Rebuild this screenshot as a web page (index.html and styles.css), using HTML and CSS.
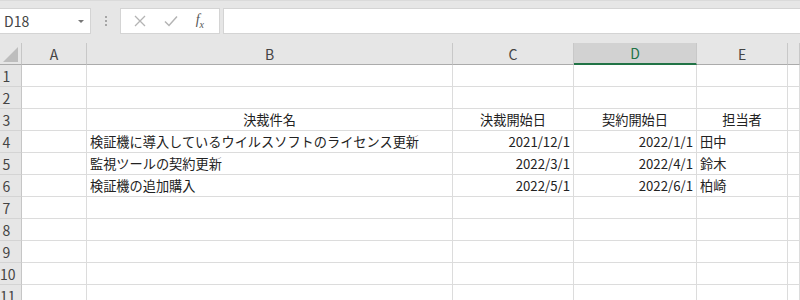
FILE: index.html
```html
<!DOCTYPE html>
<html lang="ja">
  <head>
    <meta charset="UTF-8" />
    <title>Book1 - Excel</title>
    <link rel="stylesheet" href="styles.css">
  </head>
  <body>
    <div class="toolbar">
      <div class="namebox">
        <span>D18</span>
        <span class="caret"></span>
      </div>
      <div class="grip"><i></i><i></i><i></i></div>
      <div class="fbuttons">
        <svg class="ficon" width="12" height="12" viewBox="0 0 12 12">
          <path d="M1 1 L11 11 M11 1 L1 11" stroke="#b4b4b4" stroke-width="1.3" fill="none" />
        </svg>
        <svg class="ficon" width="14" height="12" viewBox="0 0 14 12">
          <path d="M1 6.5 L5 10.5 L13 1.5" stroke="#b4b4b4" stroke-width="1.5" fill="none" />
        </svg>
        <span class="fx"><i>f</i><sub>x</sub></span>
      </div>
      <div class="formula"></div>
    </div>

    <div class="sheet">
      <div class="corner"><span></span></div>
      <div class="colhead">A</div>
      <div class="colhead">B</div>
      <div class="colhead">C</div>
      <div class="colhead selected">D</div>
      <div class="colhead">E</div>
      <div class="colhead"></div>

      <div class="rowhead">1</div>
      <div class="cell"></div><div class="cell"></div><div class="cell"></div><div class="cell"></div><div class="cell"></div><div class="cell"></div>

      <div class="rowhead">2</div>
      <div class="cell"></div><div class="cell"></div><div class="cell"></div><div class="cell"></div><div class="cell"></div><div class="cell"></div>

      <div class="rowhead">3</div>
      <div class="cell"></div>
      <div class="cell center">決裁件名</div>
      <div class="cell center">決裁開始日</div>
      <div class="cell center">契約開始日</div>
      <div class="cell center">担当者</div>
      <div class="cell"></div>

      <div class="rowhead">4</div>
      <div class="cell"></div>
      <div class="cell">検証機に導入しているウイルスソフトのライセンス更新</div>
      <div class="cell num">2021/12/1</div>
      <div class="cell num">2022/1/1</div>
      <div class="cell">田中</div>
      <div class="cell"></div>

      <div class="rowhead">5</div>
      <div class="cell"></div>
      <div class="cell">監視ツールの契約更新</div>
      <div class="cell num">2022/3/1</div>
      <div class="cell num">2022/4/1</div>
      <div class="cell">鈴木</div>
      <div class="cell"></div>

      <div class="rowhead">6</div>
      <div class="cell"></div>
      <div class="cell">検証機の追加購入</div>
      <div class="cell num">2022/5/1</div>
      <div class="cell num">2022/6/1</div>
      <div class="cell">柏崎</div>
      <div class="cell"></div>

      <div class="rowhead">7</div>
      <div class="cell"></div><div class="cell"></div><div class="cell"></div><div class="cell"></div><div class="cell"></div><div class="cell"></div>

      <div class="rowhead">8</div>
      <div class="cell"></div><div class="cell"></div><div class="cell"></div><div class="cell"></div><div class="cell"></div><div class="cell"></div>

      <div class="rowhead">9</div>
      <div class="cell"></div><div class="cell"></div><div class="cell"></div><div class="cell"></div><div class="cell"></div><div class="cell"></div>

      <div class="rowhead">10</div>
      <div class="cell"></div><div class="cell"></div><div class="cell"></div><div class="cell"></div><div class="cell"></div><div class="cell"></div>

      <div class="rowhead">11</div>
      <div class="cell"></div><div class="cell"></div><div class="cell"></div><div class="cell"></div><div class="cell"></div><div class="cell"></div>
    </div>
  </body>
</html>
```

FILE: styles.css
```css
/* styles.css */
body {
  margin: 0;
  background: #fff;
  font-family: "Noto Sans CJK JP", "Noto Sans", sans-serif;
  color: #333;
  overflow: hidden;
}

/* formula bar */
.toolbar {
  display: flex;
  align-items: flex-start;
  height: 43px;
  padding-top: 7px;
  box-sizing: border-box;
  background: #e6e6e6;
  border-top: 1px solid #dadada;
}

.namebox {
  display: flex;
  align-items: center;
  justify-content: space-between;
  width: 91px;
  height: 26px;
  box-sizing: border-box;
  padding: 0 6px 0 4px;
  background: #fff;
  border: 1px solid #d4d4d4;
  border-left: none;
  font-size: 14px;
  color: #444;
}

.caret {
  width: 0;
  height: 0;
  border-left: 3px solid transparent;
  border-right: 3px solid transparent;
  border-top: 3px solid #777;
}

.grip {
  display: flex;
  flex-direction: column;
  gap: 2px;
  width: 29px;
  align-items: center;
  padding-top: 8px;
}

.grip i {
  width: 2px;
  height: 2px;
  background: #a6a6a6;
}

.fbuttons {
  display: flex;
  align-items: center;
  justify-content: space-around;
  width: 100px;
  height: 26px;
  box-sizing: border-box;
  padding: 0 6px 0 4px;
  background: #fff;
  border: 1px solid #d4d4d4;
}

.fx {
  font-family: "Liberation Serif", serif;
  font-size: 14px;
  color: #555;
}

.fx sub {
  font-size: 10px;
  font-style: italic;
}

.formula {
  flex: 1;
  height: 26px;
  margin-left: 3px;
  box-sizing: border-box;
  background: #fff;
  border: 1px solid #d4d4d4;
  border-right: none;
}

/* grid */
.sheet {
  display: grid;
  grid-template-columns: 22px 65px 366px 121px 123px 91px 1fr;
  grid-auto-rows: 22px;
}

.sheet > div {
  box-sizing: border-box;
  border-right: 1px solid #dcdcdc;
  border-bottom: 1px solid #dcdcdc;
  font-size: 13.2px;
  line-height: 21px;
  white-space: nowrap;
  overflow: visible;
}

.corner {
  position: relative;
  background: #e6e6e6;
}

.sheet > .corner {
  border-right-color: #c6c6c6;
  border-bottom-color: #ababab;
}

.corner span {
  position: absolute;
  right: 3px;
  bottom: 2px;
  width: 0;
  height: 0;
  border-left: 15px solid transparent;
  border-bottom: 15px solid #bdbdbd;
}

.sheet > .colhead {
  background: #e6e6e6;
  border-right-color: #c8c8c8;
  border-bottom-color: #ababab;
  text-align: center;
  font-size: 14px;
  line-height: 22px;
  color: #444;
}

.sheet > .colhead.selected {
  background: #d2d2d2;
  border-bottom: 2px solid #217346;
  color: #217346;
  line-height: 21px;
}

.sheet > .rowhead {
  background: #e6e6e6;
  border-right-color: #c6c6c6;
  border-bottom-color: #d4d4d4;
  padding-right: 8px;
  text-align: center;
  font-size: 14px;
  line-height: 22px;
  color: #444;
}

.cell {
  padding: 0 3px;
  color: #222;
}

.center {
  text-align: center;
}

.num {
  text-align: right;
}
```
